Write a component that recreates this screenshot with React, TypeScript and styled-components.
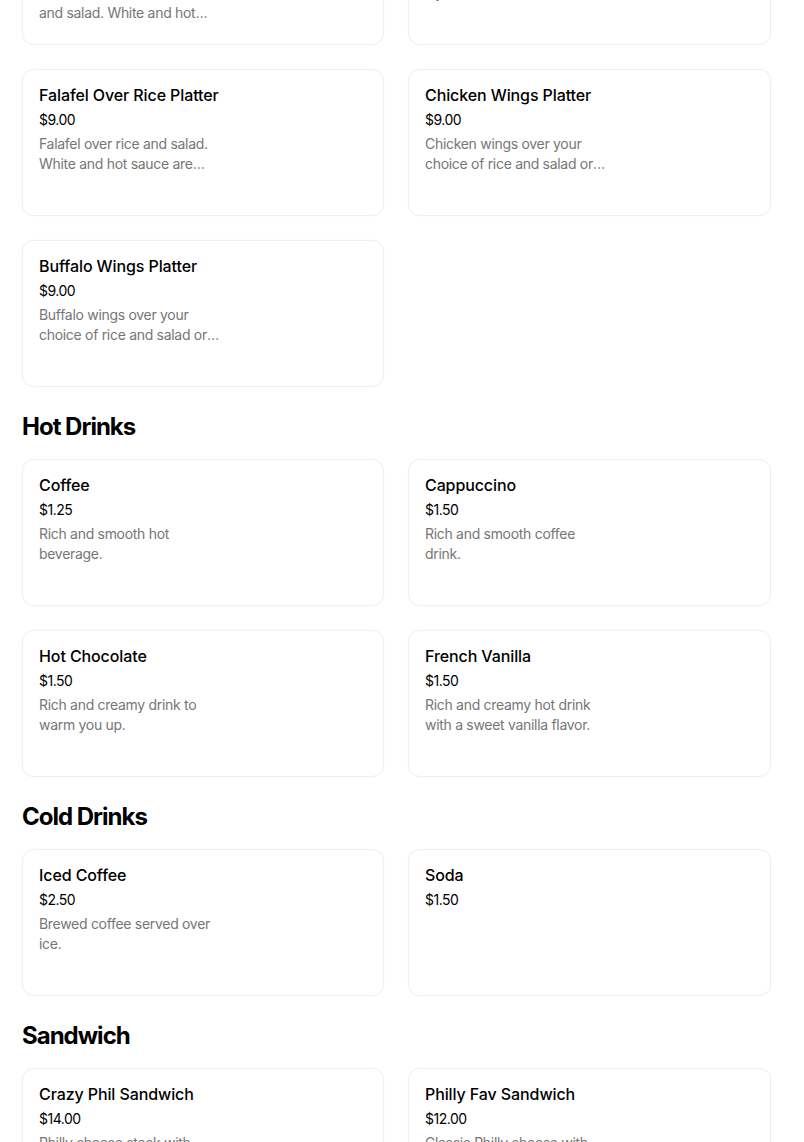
import React from "react";
import styled, { createGlobalStyle } from "styled-components";

const GlobalStyle = createGlobalStyle`
  html, body { margin: 0; padding: 0; background: #ffffff; }
  body { font-family: Inter, "Noto Sans", "Liberation Sans", sans-serif; color: #000; -webkit-font-smoothing: antialiased; }
  * { box-sizing: border-box; }
`;

const Main = styled.main`
  display: flex;
  flex-direction: column;
  margin-top: -102px;
  padding: 0 33px 0 22px;
`;

const Section = styled.section`
  display: flex;
  flex-direction: column;
  & + & { margin-top: 24px; }
`;

const Heading = styled.h2`
  margin: 0 0 16px;
  font-size: 24px;
  line-height: 32px;
  font-weight: 700;
  letter-spacing: -1px;
  color: #000;
`;

const Grid = styled.div`
  display: grid;
  grid-template-columns: 362px 363px;
  column-gap: 24px;
  row-gap: 24px;
`;

const Card = styled.div`
  height: 147px;
  border: 1px solid #f0f0f0;
  border-radius: 12px;
  background: #fff;
  box-shadow: 0 0 2px rgba(0, 0, 0, 0.04);
  padding: 15px 16px;
  display: flex;
  flex-direction: column;
  overflow: hidden;
`;

const Title = styled.div`
  max-width: 192px;
  font-size: 16px;
  line-height: 20px;
  font-weight: 500;
  color: #000;
  letter-spacing: -0.1px;
`;

const Price = styled.div`
  margin-top: 5px;
  font-size: 14px;
  line-height: 20px;
  font-weight: 400;
  color: #000;
  letter-spacing: -0.5px;
`;

const Desc = styled.div`
  margin-top: 4px;
  max-width: 182px;
  font-size: 14px;
  line-height: 20px;
  color: #767676;
  letter-spacing: -0.3px;
  display: -webkit-box;
  -webkit-line-clamp: 2;
  -webkit-box-orient: vertical;
  overflow: hidden;
`;

type Item = { title: string; price: string; desc?: string };
type Group = { name?: string; items: Item[] };

const groups: Group[] = [
  {
    items: [
      { title: "Chicken & Lamb Over Rice Platter", price: "$10.00", desc: "Chicken and lamb over rice and salad. White and hot sauce are included." },
      { title: "Lamb Gyro Combo Over Rice Platter", price: "$10.00", desc: "Gyro over rice and salad." },
      { title: "Falafel Over Rice Platter", price: "$9.00", desc: "Falafel over rice and salad. White and hot sauce are included." },
      { title: "Chicken Wings Platter", price: "$9.00", desc: "Chicken wings over your choice of rice and salad or fries." },
      { title: "Buffalo Wings Platter", price: "$9.00", desc: "Buffalo wings over your choice of rice and salad or fries." },
    ],
  },
  {
    name: "Hot Drinks",
    items: [
      { title: "Coffee", price: "$1.25", desc: "Rich and smooth hot beverage." },
      { title: "Cappuccino", price: "$1.50", desc: "Rich and smooth coffee drink." },
      { title: "Hot Chocolate", price: "$1.50", desc: "Rich and creamy drink to warm you up." },
      { title: "French Vanilla", price: "$1.50", desc: "Rich and creamy hot drink with a sweet vanilla flavor." },
    ],
  },
  {
    name: "Cold Drinks",
    items: [
      { title: "Iced Coffee", price: "$2.50", desc: "Brewed coffee served over ice." },
      { title: "Soda", price: "$1.50" },
    ],
  },
  {
    name: "Sandwich",
    items: [
      { title: "Crazy Phil Sandwich", price: "$14.00", desc: "Philly cheese steak with peppers, onions and mushrooms." },
      { title: "Philly Fav Sandwich", price: "$12.00", desc: "Classic Philly cheese with grilled onions." },
    ],
  },
];

export default function App() {
  return (
    <>
      <GlobalStyle />
      <Main>
        {groups.map((g, gi) => (
          <Section key={gi}>
            {g.name && <Heading>{g.name}</Heading>}
            <Grid>
              {g.items.map((it) => (
                <Card key={it.title}>
                  <Title>{it.title}</Title>
                  <Price>{it.price}</Price>
                  {it.desc && <Desc>{it.desc}</Desc>}
                </Card>
              ))}
            </Grid>
          </Section>
        ))}
      </Main>
    </>
  );
}
